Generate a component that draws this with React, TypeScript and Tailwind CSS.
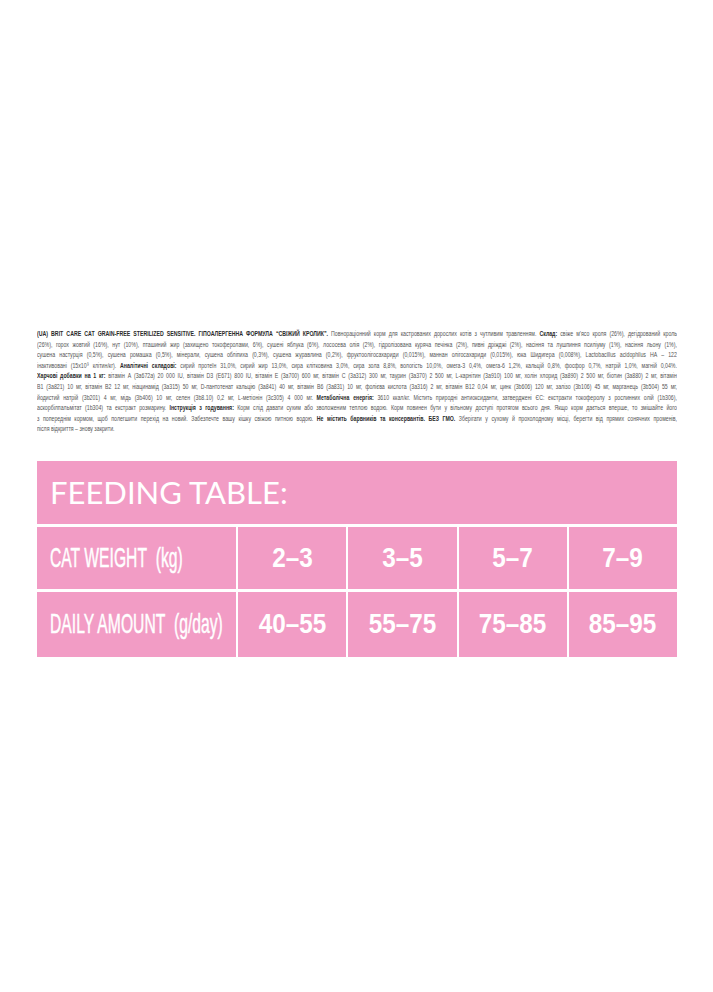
type Seg = [string, boolean?];

const lines: Seg[][] = [
  [
    ["(UA) BRIT CARE CAT GRAIN-FREE STERILIZED SENSITIVE. ГІПОАЛЕРГЕННА ФОРМУЛА “СВІЖИЙ КРОЛИК”. ", true],
    ["Повнораціонний корм для кастрованих дорослих котів з чутливим травленням. "],
    ["Склад: ", true],
    ["свіже м’ясо кроля (26%), дегідрований кроль"],
  ],
  [
    [
      "(26%), горох жовтий (16%), нут (10%), пташиний жир (захищено токоферолами, 6%), сушені яблука (6%), лососева олія (2%), гідролізована куряча печінка (2%), пивні дріжджі (2%), насіння та лушпиння псиліуму (1%), насіння льону (1%),",
    ],
  ],
  [
    [
      "сушена настурція (0,5%), сушена ромашка (0,5%), мінерали, сушена обліпиха (0,3%), сушена журавлина (0,2%), фруктоолігосахариди (0,015%), маннан олігосахариди (0,015%), юка Шидигера (0,008%), Lactobacillus acidophilus HA – 122",
    ],
  ],
  [
    ["інактивовані (15x10⁹ клітин/кг). "],
    ["Аналітичні складові: ", true],
    [
      "сирий протеїн 31,0%, сирий жир 13,0%, сира клітковина 3,0%, сира зола 8,8%, вологість 10,0%, омега-3 0,4%, омега-6 1,2%, кальцій 0,8%, фосфор 0,7%, натрій 1,0%, магній 0,04%.",
    ],
  ],
  [
    ["Харчові добавки на 1 кг: ", true],
    [
      "вітамін А (3а672а) 20 000 IU, вітамін D3 (E671) 800 IU, вітамін E (3а700) 600 мг, вітамін С (3а312) 300 мг, таурин (3а370) 2 500 мг, L-карнітин (3а910) 100 мг, холін хлорид (3а890) 2 500 мг, біотин (3а880) 2 мг, вітамін",
    ],
  ],
  [
    [
      "B1 (3а821) 10 мг, вітамін B2 12 мг, ніацинамід (3а315) 50 мг, D-пантотенат кальцію (3а841) 40 мг, вітамін B6 (3а831) 10 мг, фолієва кислота (3а316) 2 мг, вітамін B12 0,04 мг, цинк (3b606) 120 мг, залізо (3b106) 45 мг, марганець (3b504) 55 мг,",
    ],
  ],
  [
    ["йодистий натрій (3b201) 4 мг, мідь (3b406) 10 мг, селен (3b8.10) 0,2 мг, L-метіонін (3c305) 4 000 мг. "],
    ["Метаболічна енергія: ", true],
    ["3610 ккал/кг. Містить природні антиоксиданти, затверджені ЄС: екстракти токоферолу з рослинних олій (1b306),"],
  ],
  [
    ["аскорбілпальмітат (1b304) та екстракт розмарину. "],
    ["Інструкція з годування: ", true],
    [
      "Корм слід давати сухим або зволоженим теплою водою. Корм повинен бути у вільному доступі протягом всього дня. Якщо корм дається вперше, то змішайте його",
    ],
  ],
  [
    ["з попереднім кормом, щоб полегшити перехід на новий. Забезпечте вашу кішку свіжою питною водою. "],
    ["Не містить барвників та консервантів. БЕЗ ГМО. ", true],
    ["Зберігати у сухому й прохолодному місці, берегти від прямих сонячних променів,"],
  ],
  [["після відкриття – знову закрити."]],
];

const weights = ["2–3", "3–5", "5–7", "7–9"];
const amounts = ["40–55", "55–75", "75–85", "85–95"];

function Label({ children }: { children: string }) {
  return (
    <div className="flex items-center bg-[#f29cc5] pl-[13px] overflow-hidden">
      <span className="inline-block whitespace-nowrap origin-left scale-x-[0.56] font-['Liberation_Sans',Arial,sans-serif] text-[28px] text-white [-webkit-text-stroke:0.5px_white]">
        {children}
      </span>
    </div>
  );
}

function Value({ children }: { children: string }) {
  return (
    <div className="flex items-center justify-center bg-[#f29cc5]">
      <span className="inline-block whitespace-nowrap scale-x-[0.9] font-['Liberation_Sans',Arial,sans-serif] font-bold text-[27px] text-white">
        {children}
      </span>
    </div>
  );
}

export default function App() {
  return (
    <div className="min-h-[992px] bg-white pt-[329px] pl-[37px]">
      <div className="w-[640px] overflow-hidden font-['Liberation_Sans',Arial,sans-serif] text-[#555555]">
        {lines.map((line, i) => (
          <div key={i} className="h-[10.6px] overflow-hidden">
            <div
              className={
                i === lines.length - 1
                  ? "w-[980px] origin-left scale-x-[0.653] text-[8px] leading-[10.6px]"
                  : "w-[980px] origin-left scale-x-[0.653] text-justify [text-align-last:justify] text-[8px] leading-[10.6px]"
              }
            >
              {line.map(([text, bold], j) =>
                bold ? (
                  <b key={j} className="font-bold text-[#2a2a2a]">
                    {text}
                  </b>
                ) : (
                  <span key={j}>{text}</span>
                )
              )}
            </div>
          </div>
        ))}
      </div>

      <div className="mt-[26px] grid w-[640px] grid-cols-[199px_repeat(4,1fr)] grid-rows-[63px_62px_65px] gap-x-[2px] gap-y-[3px]">
        <div className="col-span-5 flex items-center bg-[#f29cc5] pl-[13px]">
          <span className="font-['Lato',sans-serif] text-[31px] text-white">FEEDING TABLE:</span>
        </div>
        <Label>{"CAT WEIGHT\u00a0 (kg)"}</Label>
        {weights.map((w) => (
          <Value key={w}>{w}</Value>
        ))}
        <Label>{"DAILY AMOUNT\u00a0 (g/day)"}</Label>
        {amounts.map((a) => (
          <Value key={a}>{a}</Value>
        ))}
      </div>
    </div>
  );
}
